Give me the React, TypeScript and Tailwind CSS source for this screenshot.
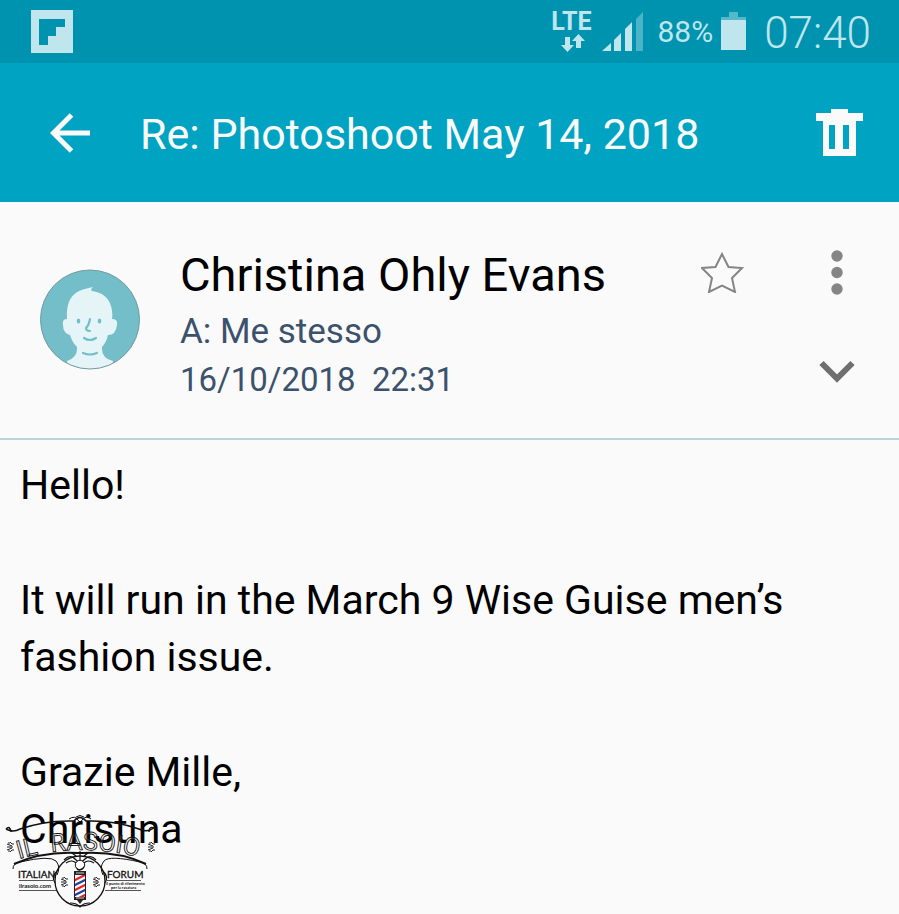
import React from "react";

function StatusBar() {
  return (
    <div className="flex h-[63px] items-center justify-between bg-[#0093b0] pl-[31px] pr-7 text-[#bfe6ed]">
      <svg className="h-[43px] w-[42px]" viewBox="0 0 42 43" aria-label="Flipboard">
        <path fill="currentColor" fillRule="evenodd" d="M0 0H42V43H0ZM8 9V35H17V26H25V17H34V9Z" />
      </svg>
      <div className="flex items-center">
        <div className="flex w-[42px] flex-col items-center">
          <span className="text-[25px] font-bold leading-6">LTE</span>
          <svg className="ml-1 h-[20px] w-[24px]" viewBox="0 0 24 20" fill="currentColor" aria-hidden="true">
            <path d="M4 3H9V11H13L6.5 18L0 11H4ZM15 14V7H11L17.500 0L24 7H20V14Z" />
          </svg>
        </div>
        <svg className="ml-[10px] h-10 w-[41px]" viewBox="0 0 41 40" fill="currentColor" aria-label="Signal">
          <path d="M0 39L9 31V39ZM12 28L19 21V39H12ZM23 17L30 10V39H23Z" />
          <path opacity=".4" d="M34 7L41 0V39H34Z" />
        </svg>
        <span className="ml-[14px] text-[30px] leading-10">88%</span>
        <svg className="ml-2 h-10 w-[25px]" viewBox="0 0 25 40" fill="currentColor" aria-label="Battery">
          <path opacity=".45" d="M8 0H17V5H25V8H0V5H8Z" />
          <path d="M0 8H25V38H0Z" />
        </svg>
        <span className="ml-[18px] pt-0.5 text-[44px] font-light leading-[50px]">07:40</span>
      </div>
    </div>
  );
}

function AppBar() {
  return (
    <header className="flex h-[139px] items-center bg-[#00a4c2] pl-[50px] pr-9 text-[#fafafa]">
      <button type="button" aria-label="Back">
        <svg className="h-10 w-10" viewBox="0 0 40 40" fill="none" stroke="currentColor" strokeWidth="5">
          <path d="M40 20H4M21.500 2L3.500 20L21.500 38" />
        </svg>
      </button>
      <h1 className="ml-[50px] flex-1 pt-0.5 text-[43px] leading-[58px]">Re: Photoshoot May 14, 2018</h1>
      <button type="button" aria-label="Delete">
        <svg className="h-12 w-[47px]" viewBox="0 0 47 48" fill="currentColor">
          <path fillRule="evenodd" d="M15 0H32V4H47V12H40V47H7V12H0V4H15ZM13 16V40H19V16ZM27 16V40H33V16Z" />
        </svg>
      </button>
    </header>
  );
}

function Avatar() {
  return (
    <svg className="mt-[67px] h-[101px] w-[101px] shrink-0" viewBox="0 0 101 101" aria-label="Contact picture">
      <defs>
        <clipPath id="disc"><circle cx="50" cy="50.5" r="49.5" /></clipPath>
      </defs>
      <circle cx="50" cy="50.5" r="49.5" fill="#73bec8" />
      <g clipPath="url(#disc)">
        <path fill="#e5f4f7" d="M27 50C26 31 33 23 45 20Q48 19 53 18Q50 21 52 22Q67 24 71 37Q73 43 72 50Q78 50 77 56Q76 66 68 66Q66 74 62 78Q61 89 73 92L72 102H28L27 92Q38 88 37 78Q32 73 30 66Q23 64 23 56Q22 50 27 50Z" />
        <g fill="none" stroke="#73bec8" strokeWidth="2.2" strokeLinecap="round">
          <path d="M50 50Q49 56 46 59Q46 62 50 62M44 69Q50 73 56 69M43 84Q50 87 57 84" />
        </g>
        <ellipse cx="38.500" cy="52" rx="1.800" ry="2.600" fill="#73bec8" />
        <ellipse cx="59.500" cy="52" rx="1.800" ry="2.600" fill="#73bec8" />
      </g>
      <circle cx="50" cy="50.5" r="49.5" fill="none" stroke="#759aa0" />
    </svg>
  );
}

function MessageHeader() {
  return (
    <section className="flex h-[238px] items-start border-b-2 border-[#bdd3d7] pl-10 pr-11">
      <Avatar />
      <div className="ml-[39px] flex-1 pt-10">
        <h2 className="text-[47px] leading-[66px] text-black">Christina Ohly Evans</h2>
        <p className="text-[35px] leading-12 text-[#3c526c]">A: Me stesso</p>
        <p className="whitespace-pre text-[33px] leading-12 text-[#3c526c]">16/10/2018  22:31</p>
      </div>
      <button type="button" aria-label="Add star" className="mt-12">
        <svg className="h-[43px] w-[44px]" viewBox="0 0 44 43" fill="none" stroke="#858585" strokeWidth="2">
          <path d="M21 4L27.500 17L41 18L31 28L34 42L21 35.500L8 42L11 28L1 18L14.500 17Z" />
        </svg>
      </button>
      <div className="ml-[74px] flex w-9 flex-col items-center pt-12">
        <button type="button" aria-label="More options">
          <svg className="h-[45px] w-3" viewBox="0 0 12 45" fill="#858585">
            <circle cx="6" cy="6" r="5.700" />
            <circle cx="6" cy="22.500" r="5.700" />
            <circle cx="6" cy="39" r="5.700" />
          </svg>
        </button>
        <button type="button" aria-label="Show details" className="mt-[65px]">
          <svg className="h-6 w-9" viewBox="0 0 36 24" fill="none" stroke="#6f6f6f" strokeWidth="6">
            <path d="M2.500 3L18 18.500L33.500 3" />
          </svg>
        </button>
      </div>
    </section>
  );
}

function Flourish({ x, y }: { x: number; y: number }) {
  return (
    <g transform={`translate(${x} ${y})`} stroke="#222" strokeWidth="1" fill="none">
      <path d="M-3-3L2-1M-3 0H3M-3 3L2 1M0-5L2-3M0 5L2 3M3-4V-2M3 4V2M-1-5V-3M-1 5V3" />
    </g>
  );
}

function ForumLogo() {
  return (
    <svg className="absolute left-[4px] top-[375px] h-[94px] w-[152px]" viewBox="4 816 152 94" aria-label="Il Rasoio Italian Forum">
      <defs>
        <clipPath id="pole"><rect x="75" y="876" width="10" height="22" /></clipPath>
        <path id="nameArc" d="M19 860Q80 842 147 860" />
      </defs>
      <g fill="none" stroke="#111">
        <path strokeWidth="1.500" d="M6 830Q13 834 20 830Q46 821 74 822Q80 815 86 822Q114 821 139 830Q147 834 154 829M6 830Q10 826 11 833M154 829Q149 827 149 833" />
        <path d="M69 820Q75 816 78 821Q80 825 82 821Q86 816 91 820M76 818Q80 815 84 818" />
        <path strokeWidth="2" d="M14 865Q43 852 78 854H82Q119 852 146 865" />
        <path d="M13 870Q13 864 20 863Q50 856 56 862Q61 868 57 876M147 870Q147 864 140 863Q109 856 104 862Q99 868 103 876" />
        <circle cx="80" cy="882" r="25" strokeWidth="1.300" />
        <path strokeWidth="1.200" d="M64 861Q70 855 75 860Q80 866 85 860Q91 855 96 861M66 864Q72 860 76 864M94 864Q88 860 84 864M72 854L76 857M88 854L84 857M80 852V862M70 904Q77 904 80 908Q83 904 90 904M57 872Q51 878 55 884M103 872Q109 878 105 884" />
        <path stroke="#555" d="M19 881.500H54M19 891.500H56M106 881.500H141M105 891.500H141" />
      </g>
      <g fontFamily="Roboto, sans-serif" fontSize="25" fill="#fafafa" fillOpacity=".2" stroke="#111" strokeWidth=".9">
        <text>
          <textPath href="#nameArc" startOffset="0">IL</textPath>
        </text>
        <text>
          <textPath href="#nameArc" startOffset="33">RASOIO</textPath>
        </text>
      </g>
      <g fill="#111" stroke="#111" strokeWidth=".3" fontFamily="Lato, sans-serif" fontSize="10">
        <text x="18" y="879">ITALIAN</text>
        <text x="107" y="879">FORUM</text>
      </g>
      <g fill="#111" fontFamily="Lato, sans-serif" fontWeight="700">
        <text x="19" y="889" fontSize="6">ilrasoio.com</text>
        <text x="106" y="886" fontSize="4">il punto di riferimento</text>
        <text x="111" y="890" fontSize="4">per la rasatura</text>
      </g>
      <Flourish x={10} y={848} />
      <Flourish x={151} y={848} />
      <Flourish x={64} y={883} />
      <Flourish x={96} y={883} />
      <circle cx="80" cy="866" r="4.700" fill="#fff" stroke="#111" />
      <path d="M76 868Q80 873 84 867V869Q81 873 77 871Z" fill="#111" />
      <path d="M74 872H86V876H74ZM74 898H86V901H83L80 905L77 901H74Z" fill="#222" />
      <path d="M76 874H84M76 899H84" stroke="#ccc" />
      <rect x="75" y="876" width="10" height="22" fill="#fff" />
      <g clipPath="url(#pole)" strokeWidth="2.300">
        <path stroke="#ed2024" d="M73 882L87 875M73 892L87 885M73 902L87 895" />
        <path stroke="#253d9c" d="M73 887L87 880M73 897L87 890" />
      </g>
      <path d="M74.500 876V898M85.500 876V898" stroke="#222" />
    </svg>
  );
}

export default function App() {
  return (
    <div className="min-h-screen bg-[#fafafa] font-['Roboto',sans-serif]">
      <StatusBar />
      <AppBar />
      <main>
        <MessageHeader />
        <article className="relative px-5 pb-14 pt-[17px] text-[41px] leading-[57px] text-black">
          <p>Hello!</p>
          <p className="mt-[58px]">It will run in the March 9 Wise Guise men’s fashion issue.</p>
          <p className="mt-[58px]">Grazie Mille,<br />Christina</p>
          <ForumLogo />
        </article>
      </main>
    </div>
  );
}
